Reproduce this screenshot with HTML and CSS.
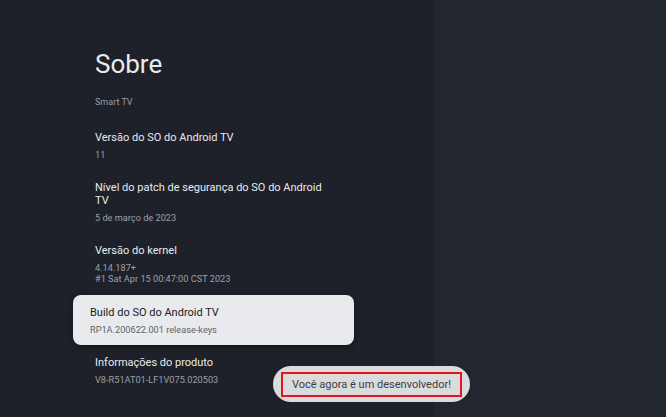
FILE: index.html
```html
<!DOCTYPE html>
<html lang="pt-BR">
<head>
<meta charset="UTF-8">
<meta name="viewport" content="width=device-width, initial-scale=1.0">
<title>Sobre</title>
<link rel="stylesheet" href="styles.css">
</head>
<body>

<div class="screen">
    <div class="panel">
        <div class="column">
            <h1 class="page-title">Sobre</h1>
            <p class="device-name">Smart TV</p>

            <div class="item">
                <div class="item-title">Versão do SO do Android TV</div>
                <div class="item-sub">11</div>
            </div>
            <div class="item">
                <div class="item-title">Nível do patch de segurança do SO do Android TV</div>
                <div class="item-sub">5 de março de 2023</div>
            </div>
            <div class="item">
                <div class="item-title">Versão do kernel</div>
                <div class="item-sub">4.14.187+<br>#1 Sat Apr 15 00:47:00 CST 2023</div>
            </div>
            <div class="item focused">
                <div class="item-title">Build do SO do Android TV</div>
                <div class="item-sub">RP1A.200622.001 release-keys</div>
            </div>
            <div class="item">
                <div class="item-title">Informações do produto</div>
                <div class="item-sub">V8-R51AT01-LF1V075.020503</div>
            </div>
        </div>
    </div>
    <div class="side"></div>

    <div class="toast">
        <span class="toast-text">Você agora é um desenvolvedor!</span>
    </div>
</div>

</body>
</html>
```

FILE: styles.css
```css
/* Android TV settings - about screen */
body {
    margin: 0;
    padding: 0;
    font-family: Roboto, "Noto Sans", sans-serif;
    background-color: #22262e;
}

.screen {
    position: relative;
    display: flex;
    width: 666px;
    height: 417px;
    overflow: hidden;
}

.panel {
    width: 434px;
    height: 100%;
    background-color: #1e2129;
}

.side {
    flex: 1;
    background-color: #22262e;
}

.column {
    width: 238px;
    margin-left: 95px;
    padding-top: 48px;
}

.page-title {
    margin: 0;
    font-size: 26px;
    font-weight: 400;
    line-height: 32px;
    color: #e8eaed;
}

.device-name {
    margin: 16px 0 0;
    font-size: 9px;
    line-height: 12px;
    color: #9aa0a6;
}

.item {
    padding: 11px 0 10px;
}

.item:first-of-type {
    margin-top: 12px;
}

.item-title {
    font-size: 11px;
    line-height: 13px;
    color: #e8eaed;
}

.item-sub {
    margin-top: 5px;
    font-size: 9.2px;
    line-height: 11px;
    color: #9aa0a6;
}

.item.focused {
    margin: 1px -21px 0 -22px;
    padding: 11px 17px 10px;
    background-color: #e8eaed;
    border-radius: 8px;
    box-shadow: 0 2px 6px rgba(0, 0, 0, 0.4);
}

.item.focused .item-title {
    color: #202124;
}

.item.focused .item-sub {
    color: #5f6368;
}

.toast {
    position: absolute;
    left: 273px;
    top: 366px;
    width: 197px;
    height: 36px;
    box-sizing: border-box;
    padding: 6px 8px;
    background-color: #dadbdc;
    border-radius: 18px;
}

.toast-text {
    display: block;
    height: 25px;
    box-sizing: border-box;
    border: 2px solid #e8141b;
    font-size: 11px;
    line-height: 21px;
    text-align: center;
    color: #3c4043;
}
```
